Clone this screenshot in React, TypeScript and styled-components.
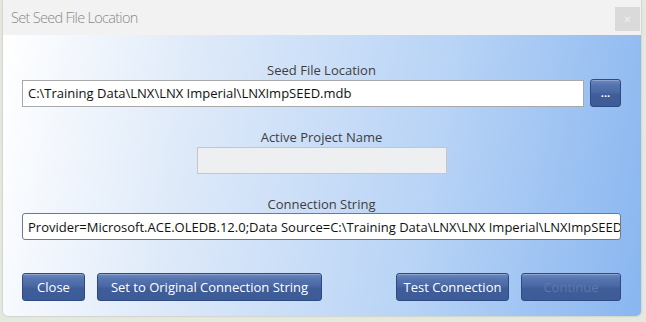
import React from "react";
import styled, { createGlobalStyle } from "styled-components";

const Global = createGlobalStyle`
  html, body { margin: 0; padding: 0; }
  body {
    width: 646px; height: 322px; overflow: hidden;
    background: #e4e8de;
    font-family: "Open Sans", "Noto Sans", sans-serif;
  }
`;

const Page = styled.div`
  width: 646px;
  height: 322px;
  padding-left: 3px;
  box-sizing: border-box;
`;

const Dialog = styled.div`
  width: 638px;
  height: 316px;
  display: flex;
  flex-direction: column;
  border-radius: 0 0 5px 5px;
  overflow: hidden;
  box-shadow: 0 0 2px rgba(0,0,0,0.25);
`;

const TitleBar = styled.div`
  height: 35px;
  background: #f2f2f2;
  display: flex;
  align-items: center;
  justify-content: space-between;
  padding: 0 1px 0 8px;
`;

const Title = styled.div`
  font-size: 14.5px;
  color: #8a8a8a;
  font-weight: 300;
  letter-spacing: -0.7px;
`;

const CloseX = styled.div`
  width: 25px;
  height: 24px;
  background: #dadada;
  color: #f2f2f2;
  font-size: 13px;
  display: flex;
  align-items: center;
  justify-content: center;
  margin-top: 2px;
`;

const Body = styled.div`
  flex: 1;
  background: linear-gradient(100deg, #ffffff 0%, #dde9f9 30%, #b9d4f6 65%, #89b6f0 100%);
  padding: 26px 20px 0 19px;
  display: flex;
  flex-direction: column;
`;

const Label = styled.div`
  text-align: center;
  font-size: 13px;
  color: #3e3e3e;
  line-height: 18px;
  height: 18px;
`;

const Row = styled.div<{ $mt?: number }>`
  display: flex;
  align-items: center;
  gap: 6px;
  margin-top: ${(p) => p.$mt ?? 0}px;
`;

const Gap = styled.div<{ $h: number }>`
  height: ${(p) => p.$h}px;
`;

const TextBox = styled.div<{ $dark?: boolean; $width?: number; $disabled?: boolean }>`
  box-sizing: border-box;
  height: 27px;
  ${(p) => (p.$width ? `width: ${p.$width}px;` : "flex: 1;")}
  background: ${(p) => (p.$disabled ? "#eeeff1" : "#ffffff")};
  border: 1px solid ${(p) => (p.$dark ? "#6a7a90" : p.$disabled ? "#c6c6c6" : "#a9a9a9")};
  border-radius: ${(p) => (p.$dark ? "3px" : "0")};
  font-size: 13px;
  color: #111;
  padding: 0 5px;
  display: flex;
  align-items: center;
  white-space: nowrap;
  overflow: hidden;
`;

const Centered = styled.div<{ $mt?: number }>`
  display: flex;
  justify-content: center;
  margin-top: ${(p) => p.$mt ?? 0}px;
`;

const Button = styled.div<{ $width: number; $disabled?: boolean }>`
  box-sizing: border-box;
  width: ${(p) => p.$width}px;
  height: 28px;
  border: 1px solid #2d4a82;
  border-radius: 3px;
  background: linear-gradient(180deg, #6a88c0 0%, #5573ad 20%, #4b69a4 45%, #3f5d98 55%, #3d5b96 100%);
  box-shadow: inset 0 1px 0 rgba(255,255,255,0.25);
  color: ${(p) => (p.$disabled ? "#5c78ae" : "#ffffff")};
  font-size: 13px;
  display: flex;
  align-items: center;
  justify-content: center;
  white-space: nowrap;
`;

const Browse = styled(Button)`
  font-size: 11px;
  font-weight: 700;
  padding-bottom: 2px;
`;

const ButtonRow = styled.div`
  display: flex;
  margin-top: 33px;
`;

const Spacer = styled.div<{ $w?: number }>`
  ${(p) => (p.$w ? `width: ${p.$w}px;` : "flex: 1;")}
`;

export default function App() {
  return (
    <Page>
      <Global />
      <Dialog>
        <TitleBar>
          <Title>Set Seed File Location</Title>
          <CloseX>×</CloseX>
        </TitleBar>
        <Body>
          <Label>Seed File Location</Label>
          <Row>
            <TextBox>C:\Training Data\LNX\LNX Imperial\LNXImpSEED.mdb</TextBox>
            <Browse $width={31}>...</Browse>
          </Row>
          <Gap $h={21} />
          <Label>Active Project Name</Label>
          <Centered $mt={1}>
            <TextBox $width={250} $disabled />
          </Centered>
          <Gap $h={21} />
          <Label>Connection String</Label>
          <Row>
            <TextBox $dark>
              Provider=Microsoft.ACE.OLEDB.12.0;Data Source=C:\Training Data\LNX\LNX Imperial\LNXImpSEED.mdb
            </TextBox>
          </Row>
          <ButtonRow>
            <Button $width={63}>Close</Button>
            <Spacer $w={12} />
            <Button $width={225}>Set to Original Connection String</Button>
            <Spacer />
            <Button $width={113}>Test Connection</Button>
            <Spacer $w={12} />
            <Button $width={100} $disabled>Continue</Button>
          </ButtonRow>
        </Body>
      </Dialog>
    </Page>
  );
}
